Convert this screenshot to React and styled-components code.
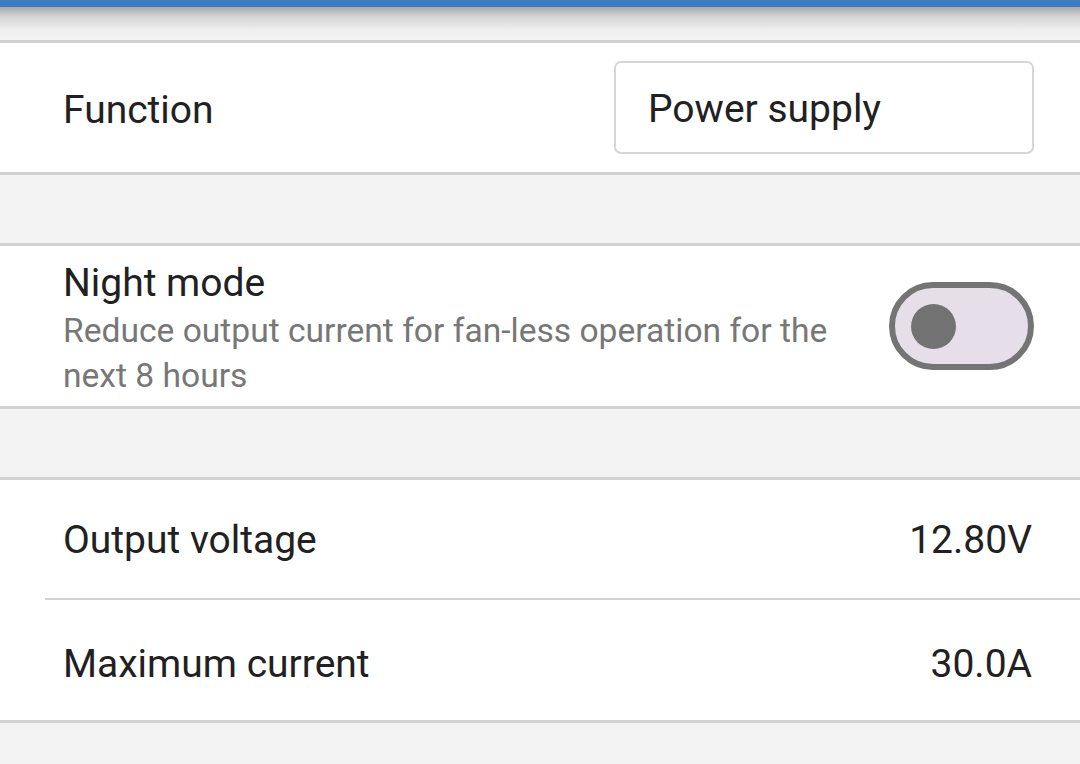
import React from 'react';
import styled, { createGlobalStyle } from 'styled-components';

const GlobalStyle = createGlobalStyle`
  html, body {
    margin: 0;
    padding: 0;
    background: #f3f3f3;
    font-family: Roboto, "Noto Sans", sans-serif;
  }
`;

const App = () => {
	return (
		<Page>
			<GlobalStyle />
			<TopBar />
			<Shade />
			<Section>
				<Row height="129px">
					<Label shift="5px">Function</Label>
					<SelectBox>Power supply</SelectBox>
				</Row>
			</Section>
			<Gap />
			<Section>
				<Row height="160px">
					<TextBlock>
						<Label>Night mode</Label>
						<Description>Reduce output current for fan-less operation for the next 8 hours</Description>
					</TextBlock>
					<Toggle>
						<Knob />
					</Toggle>
				</Row>
			</Section>
			<Gap />
			<Section>
				<Row height="118px">
					<Label shift="2px">Output voltage</Label>
					<Value shift="2px">12.80V</Value>
				</Row>
				<Divider />
				<Row height="120px">
					<Label shift="8px">Maximum current</Label>
					<Value shift="8px">30.0A</Value>
				</Row>
			</Section>
		</Page>
	);
};

export default App;

const Page = styled.div`
    width: 1080px;
    min-height: 764px;
    background: #f3f3f3;
    overflow: hidden;
`

const TopBar = styled.div`
    height: 7px;
    background: #3d7cc1;
`

const Shade = styled.div`
    height: 33px;
    background: linear-gradient(to bottom, #a9a9a9 0%, #d6d6d6 30%, #eeeeee 70%, #f3f3f3 100%);
`

const Section = styled.div`
    background: #ffffff;
    border-top: 3px solid #d2d2d2;
    border-bottom: 3px solid #d2d2d2;
`

const Gap = styled.div`
    height: 68px;
`

const Row = styled.div`
    height: ${p => p.height};
    display: flex;
    align-items: center;
    justify-content: space-between;
    padding: 0 46px 0 63px;
    gap: 40px;
`

const Label = styled.div`
    font-size: 39px;
    line-height: 44px;
    color: #212121;
    margin-top: ${p => p.shift || '0'};
`

const Value = styled.div`
    font-size: 39px;
    line-height: 44px;
    color: #212121;
    margin-right: 2px;
    margin-top: ${p => p.shift || '0'};
`

const SelectBox = styled.div`
    width: 420px;
    height: 93px;
    box-sizing: border-box;
    border: 2px solid #d6d6d6;
    border-radius: 7px;
    display: flex;
    align-items: center;
    padding-left: 32px;
    padding-top: 3px;
    font-size: 39px;
    color: #212121;
`

const TextBlock = styled.div`
    flex: 1;
    padding-top: 7px;
`

const Description = styled.div`
    font-size: 33.6px;
    line-height: 45px;
    color: #777777;
    margin-top: 3px;
`

const Toggle = styled.div`
    width: 145px;
    height: 88px;
    flex-shrink: 0;
    box-sizing: border-box;
    border: 6px solid #747474;
    border-radius: 44px;
    background: #e6dfea;
    display: flex;
    align-items: center;
    padding-left: 16px;
`

const Knob = styled.div`
    width: 45px;
    height: 45px;
    border-radius: 50%;
    background: #727272;
`

const Divider = styled.div`
    height: 2px;
    margin-left: 45px;
    background: #d2d2d2;
`
